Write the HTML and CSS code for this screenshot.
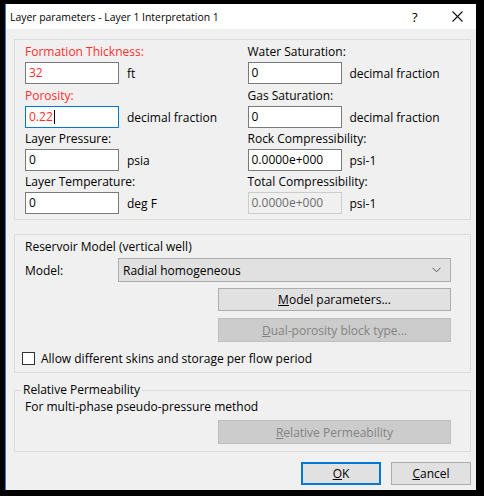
FILE: index.html
```html
<!DOCTYPE html>
<html>
<head>
<meta charset="utf-8">
<link rel="stylesheet" href="styles.css">
</head>
<body>
<div class="win">
  <div class="titlebar">
    <span class="title">Layer parameters - Layer 1 Interpretation 1</span>
    <span class="help">?</span>
    <svg class="close" width="11" height="11" viewBox="0 0 11 11"><path d="M0.5 0.5 L10.5 10.5 M10.5 0.5 L0.5 10.5" stroke="#111" stroke-width="1.1" fill="none"/></svg>
  </div>
  <div class="body">
    <div class="group g1">
      <div class="col">
        <div class="field"><div class="lbl red">Formation Thickness:</div><div class="row"><div class="input red">32</div><span class="unit">ft</span></div></div>
        <div class="field"><div class="lbl red">Porosity:</div><div class="row"><div class="input red focus">0.22<span class="caret"></span></div><span class="unit">decimal fraction</span></div></div>
        <div class="field"><div class="lbl">Layer Pressure:</div><div class="row"><div class="input">0</div><span class="unit">psia</span></div></div>
        <div class="field"><div class="lbl">Layer Temperature:</div><div class="row"><div class="input">0</div><span class="unit">deg F</span></div></div>
      </div>
      <div class="col">
        <div class="field"><div class="lbl">Water Saturation:</div><div class="row"><div class="input">0</div><span class="unit">decimal fraction</span></div></div>
        <div class="field"><div class="lbl">Gas Saturation:</div><div class="row"><div class="input">0</div><span class="unit">decimal fraction</span></div></div>
        <div class="field"><div class="lbl">Rock Compressibility:</div><div class="row"><div class="input">0.0000e+000</div><span class="unit">psi-1</span></div></div>
        <div class="field"><div class="lbl">Total Compressibility:</div><div class="row"><div class="input disabled">0.0000e+000</div><span class="unit">psi-1</span></div></div>
      </div>
    </div>
    <div class="group g2">
      <div class="gtitle">Reservoir Model (vertical well)</div>
      <div class="modelrow">
        <span class="mlabel">Model:</span>
        <div class="combo"><span>Radial homogeneous</span><svg width="9" height="6" viewBox="0 0 9 6"><path d="M0.5 0.8 L4.5 4.8 L8.5 0.8" stroke="#555" stroke-width="1" fill="none"/></svg></div>
      </div>
      <div class="btn wide"><u>M</u>odel parameters...</div>
      <div class="btn wide dis"><u>D</u>ual-porosity block type...</div>
      <div class="check"><span class="box"></span><span>Allow different skins and storage per flow period</span></div>
    </div>
    <fieldset class="g3">
      <legend>Relative Permeability</legend>
      <div class="note">For multi-phase pseudo-pressure method</div>
      <div class="btn wide dis"><u>R</u>elative Permeability</div>
    </fieldset>
    <div class="actions">
      <div class="btn act ok"><u>O</u>K</div>
      <div class="btn act"><u>C</u>ancel</div>
    </div>
  </div>
</div>
</body>
</html>
```

FILE: styles.css
```css
html, body {
  margin: 0;
  padding: 0;
  background: #000;
}
body {
  width: 484px;
  height: 496px;
  overflow: hidden;
  font-family: "Open Sans", "Noto Sans", sans-serif;
  font-size: 12px;
  color: #000;
}
.win {
  margin: 4px 0 0 5px;
  width: 471px;
  height: 486px;
  border-left: 1px solid #1883d7;
  box-sizing: border-box;
  background: #f0f0f0;
  display: flex;
  flex-direction: column;
}
.titlebar {
  height: 25px;
  background: #fff;
  display: flex;
  align-items: center;
  padding-left: 4px;
  flex: none;
}
.title {
  flex: 1;
  line-height: 16px;
  margin-top: 1px;
  font-size: 10.4px;
}
.help {
  width: 10px;
  margin-right: 30px;
  font-size: 13px;
}
.close {
  margin-right: 13px;
}
.body {
  flex: 1;
  display: flex;
  flex-direction: column;
  padding: 10px 5px 0 8px;
}
.group {
  border: 1px solid #dcdcdc;
  box-sizing: border-box;
}
.g1 {
  height: 181px;
  display: flex;
  padding: 4px 0 0 10px;
}
.col {
  width: 224px;
  display: flex;
  flex-direction: column;
}
.field {
  margin-bottom: 3px;
}
.field:first-child {
  margin-bottom: 4px;
}
.lbl {
  line-height: 16px;
  height: 16px;
  margin-bottom: 2px;
  white-space: nowrap;
}
.red {
  color: #ff2f2f;
}
.row {
  display: flex;
  align-items: center;
}
.input {
  width: 94px;
  height: 22px;
  box-sizing: border-box;
  border: 1px solid #7a7a7a;
  background: #fff;
  padding-left: 3px;
  line-height: 20px;
  display: flex;
  align-items: center;
}
.input.focus {
  border-color: #0078d7;
}
.caret {
  width: 1px;
  height: 14px;
  background: #000;
  margin-left: 1px;
}
.input.disabled {
  border-color: #cccccc;
  background: #f0f0f0;
  color: #6d6d6d;
}
.unit {
  margin-left: 8px;
  white-space: nowrap;
}
.g2 {
  margin-top: 14px;
  height: 139px;
  padding: 4px 0 0 10px;
}
.gtitle {
  line-height: 16px;
}
.modelrow {
  display: flex;
  align-items: center;
  margin-top: 3px;
}
.mlabel {
  width: 93px;
}
.combo {
  width: 333px;
  height: 24px;
  box-sizing: border-box;
  border: 1px solid #adadad;
  background: #e1e1e1;
  display: flex;
  align-items: center;
  justify-content: space-between;
  padding: 0 9px 0 4px;
}
.btn {
  box-sizing: border-box;
  border: 1px solid #adadad;
  background: #e1e1e1;
  height: 23px;
  display: flex;
  align-items: center;
  justify-content: center;
}
.btn.wide {
  width: 233px;
  margin-left: 193px;
  margin-top: 6px;
}
.btn.dis {
  background: #cccccc;
  border-color: #bfbfbf;
  color: #838383;
}
.g2 .btn.dis {
  margin-top: 7px;
  height: 24px;
}
.check {
  display: flex;
  align-items: center;
  margin-top: 8px;
  margin-left: -3px;
}
.box {
  width: 13px;
  height: 13px;
  box-sizing: border-box;
  border: 1px solid #333;
  background: #fff;
  margin-right: 6px;
}
.g3 {
  margin: 9px 0 0 0;
  border: 1px solid #dcdcdc;
  padding: 1px 0 6px 10px;
  height: 70px;
  box-sizing: border-box;
  min-width: 0;
}
.g3 legend {
  padding: 0 2px;
  margin-left: -4px;
  line-height: 16px;
}
.note {
  line-height: 16px;
}
.g3 .btn.wide {
  margin-top: 5px;
  height: 24px;
}
.actions {
  display: flex;
  justify-content: flex-end;
  gap: 10px;
  margin-top: 10px;
  padding-right: 0;
}
.btn.act {
  width: 80px;
  height: 23px;
}
.btn.ok {
  border: 2px solid #0078d7;
}
```
